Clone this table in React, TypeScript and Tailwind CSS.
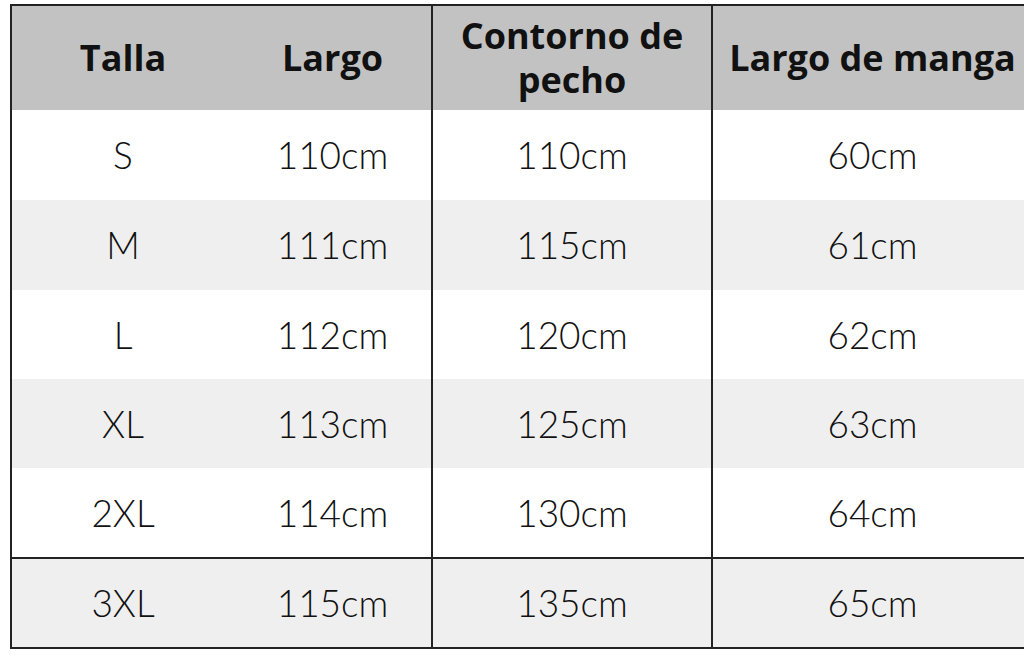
const HEAD = ['Talla', 'Largo', 'Contorno de pecho', 'Largo de manga'];

const ROWS = [
  ['S', '110cm', '110cm', '60cm'],
  ['M', '111cm', '115cm', '61cm'],
  ['L', '112cm', '120cm', '62cm'],
  ['XL', '113cm', '125cm', '63cm'],
  ['2XL', '114cm', '130cm', '64cm'],
  ['3XL', '115cm', '135cm', '65cm'],
];

const ROW_H = ['h-[90px]', 'h-[90px]', 'h-[89px]', 'h-[89px]', 'h-[89px]', 'h-[90px]'];
const COLS = 'grid grid-cols-[222px_197px_280px_321px]';

export default function App() {
  return (
    <div className="w-[1024px] h-[659px] overflow-hidden bg-white pl-[10px] pt-[4px]">
      <div className="w-[1030px] border-2 border-[#222] text-[#111]">
        <div className={`${COLS} h-[104px] bg-[#c2c2c2] font-['Open_Sans',sans-serif] font-bold text-[36px] leading-[44px]`}>
          {HEAD.map((h, i) => (
            <div
              key={h}
              className={`flex items-center justify-center text-center ${i >= 2 ? 'border-l-2 border-[#222]' : ''} ${i === 2 ? 'px-4' : ''}`}
            >
              {h}
            </div>
          ))}
        </div>
        {ROWS.map((r, ri) => (
          <div
            key={r[0]}
            className={`${COLS} ${ROW_H[ri]} ${ri % 2 ? 'bg-[#efefef]' : 'bg-white'} ${ri === 5 ? 'border-t-2 border-[#222]' : ''} font-['Lato',sans-serif] font-light text-[37px]`}
          >
            {r.map((c, ci) => (
              <div
                key={ci}
                className={`flex items-center justify-center ${ci >= 2 ? 'border-l-2 border-[#222]' : ''}`}
              >
                {c}
              </div>
            ))}
          </div>
        ))}
      </div>
    </div>
  );
}
